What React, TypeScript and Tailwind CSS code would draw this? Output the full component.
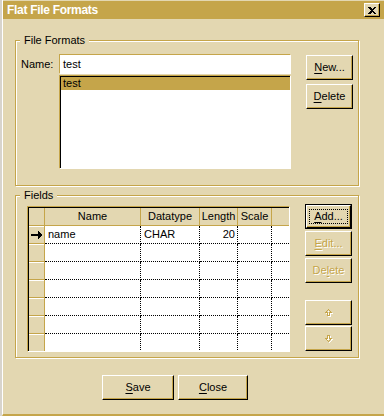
import React from 'react';

const raised =
  'border border-t-white border-l-white border-r-black border-b-black shadow-[inset_-1px_-1px_0_#c5a54a] bg-[#e3d7b1]';
const disabledText = 'text-[#c5a54a] [text-shadow:1px_1px_0_#ffffff]';

function Btn({
  children,
  w,
  disabled = false,
  isDefault = false,
}: {
  children: React.ReactNode;
  w: string;
  disabled?: boolean;
  isDefault?: boolean;
}) {
  if (isDefault) {
    return (
      <div className={`${w} h-[25px] border border-black flex`}>
        <div className={`${raised} flex-1 flex items-center justify-center`}>
          <span className="border border-dotted border-black px-[4px] leading-[13px]">{children}</span>
        </div>
      </div>
    );
  }
  return (
    <div
      className={`${w} h-[25px] ${raised} flex items-center justify-center ${disabled ? disabledText : 'text-black'}`}
    >
      {children}
    </div>
  );
}

function U({ children }: { children: React.ReactNode }) {
  return <span className="underline underline-offset-[2px]">{children}</span>;
}

function Group({
  label,
  h,
  children,
}: {
  label: string;
  h: string;
  children: React.ReactNode;
}) {
  return (
    <div
      className={`relative ml-[12px] w-[344px] ${h} border border-[#c5a54a] shadow-[inset_1px_1px_0_#ffffff,1px_1px_0_#ffffff]`}
    >
      <span className="absolute -top-[7px] left-[4px] px-[4px] bg-[#e3d7b1] leading-[13px]">{label}</span>
      {children}
    </div>
  );
}

const cols = ['w-[16px]', 'w-[96px]', 'w-[59px]', 'w-[38px]', 'w-[34px]', 'flex-1'];

function Arrow() {
  return (
    <svg width="12" height="8" viewBox="0 0 12 8" shapeRendering="crispEdges">
      <rect x="0" y="3" width="8" height="2" fill="#000" />
      <path d="M7 0 L12 4 L7 8 Z" fill="#000" />
    </svg>
  );
}

function UpIcon() {
  return (
    <svg width="9" height="9" viewBox="0 0 9 9" shapeRendering="crispEdges">
      <path d="M4.5 1.5 L1.5 4.5 L3.5 4.5 L3.5 7.5 L5.5 7.5 L5.5 4.5 L7.5 4.5 Z" fill="none" stroke="#ffffff" transform="translate(1,1)" />
      <path d="M4.5 1.5 L1.5 4.5 L3.5 4.5 L3.5 7.5 L5.5 7.5 L5.5 4.5 L7.5 4.5 Z" fill="none" stroke="#c5a54a" />
    </svg>
  );
}

function DownIcon() {
  return (
    <svg width="9" height="9" viewBox="0 0 9 9" shapeRendering="crispEdges">
      <path d="M4.5 7.5 L1.5 4.5 L3.5 4.5 L3.5 1.5 L5.5 1.5 L5.5 4.5 L7.5 4.5 Z" fill="none" stroke="#ffffff" transform="translate(1,1)" />
      <path d="M4.5 7.5 L1.5 4.5 L3.5 4.5 L3.5 1.5 L5.5 1.5 L5.5 4.5 L7.5 4.5 Z" fill="none" stroke="#c5a54a" />
    </svg>
  );
}

function Grid() {
  const headers = ['', 'Name', 'Datatype', 'Length', 'Scale', ''];
  const rows = [
    ['name', 'CHAR', '20', ''],
    ['', '', '', ''],
    ['', '', '', ''],
    ['', '', '', ''],
    ['', '', '', ''],
    ['', '', '', ''],
    ['', '', '', ''],
  ];
  return (
    <div className="w-[263px] h-[146px] border border-t-[#c5a54a] border-l-[#c5a54a] border-b-white border-r-white bg-white overflow-hidden">
      <div className="h-full border-t border-l border-black flex flex-col overflow-hidden">
        <div className="flex h-[18px] shrink-0">
          {headers.map((h, i) => (
            <div
              key={i}
              className={`${cols[i]} h-[18px] bg-[#e3d7b1] border-b border-[#c5a54a] ${i < 5 ? 'border-r' : ''} flex items-center justify-center leading-[13px]`}
            >
              {h}
            </div>
          ))}
        </div>
        {rows.map((r, ri) => (
          <div key={ri} className="flex h-[18px] shrink-0">
            <div className="w-[16px] h-[18px] bg-[#e3d7b1] border-r border-b border-[#c5a54a] shadow-[inset_0_1px_0_#ffffff] flex items-center justify-center">
              {ri === 0 ? <Arrow /> : null}
            </div>
            <div className={`${cols[1]} h-[18px] border-r border-b border-dotted border-black pl-[3px] flex items-center leading-[13px]`}>
              {r[0]}
            </div>
            <div className={`${cols[2]} h-[18px] border-r border-b border-dotted border-black pl-[3px] flex items-center leading-[13px]`}>
              {r[1]}
            </div>
            <div className={`${cols[3]} h-[18px] border-r border-b border-dotted border-black pr-[2px] flex items-center justify-end leading-[13px]`}>
              {r[2]}
            </div>
            <div className={`${cols[4]} h-[18px] border-r border-b border-dotted border-black`} />
            <div className="flex-1 h-[18px] border-b border-dotted border-black" />
          </div>
        ))}
      </div>
    </div>
  );
}

export default function App() {
  return (
    <div className="w-[384px] h-[416px] flex font-['Liberation_Sans',Arial,sans-serif] text-[11px] text-black overflow-hidden">
      <div className="w-[2px] h-full bg-[#d8d4cc]" />
      <div className="flex-1 h-full bg-[#e3d7b1] border-l border-white border-b-2 border-b-[#c5a54a] pt-[1px] flex flex-col">
        <div className="h-[18px] bg-[#c5a54a] flex items-center justify-between pl-[4px] pr-[4px]">
          <span className="text-white font-bold text-[12px] tracking-[-0.3px] leading-[16px]">Flat File Formats</span>
          <div className={`w-[16px] h-[14px] ${raised} flex items-center justify-center`}>
            <svg width="8" height="7" viewBox="0 0 8 7" shapeRendering="crispEdges">
              <path d="M0 0h2l2 2 2-2h2L5 3.5 8 7H6L4 5 2 7H0l3-3.5z" fill="#000" />
            </svg>
          </div>
        </div>

        <div className="mt-[21px]">
          <Group label="File Formats" h="h-[146px]">
            <div className="flex pl-[5px] pt-[13px]">
              <div className="w-[38px] h-[20px] flex items-center leading-[13px]">Name:</div>
              <div className="w-[232px] flex flex-col">
                <div className="h-[20px] border border-t-[#c5a54a] border-l-[#c5a54a] border-b-white border-r-white shadow-[inset_1px_1px_0_#000]">
                  <div className="h-full bg-white pl-[3px] pt-[1px] flex items-center leading-[13px]">test</div>
                </div>
                <div className="mt-[1px] h-[94px] border border-t-[#c5a54a] border-l-[#c5a54a] border-b-white border-r-white shadow-[inset_1px_1px_0_#000] bg-white pt-[1px] pl-[1px]">
                  <div className="h-[13px] bg-[#c5a54a] pl-[2px] leading-[13px]">test</div>
                </div>
              </div>
              <div className="ml-[15px] pt-[1px] flex flex-col gap-[4px]">
                <Btn w="w-[47px]">
                  <span>
                    <U>N</U>ew...
                  </span>
                </Btn>
                <Btn w="w-[47px]">
                  <span>
                    <U>D</U>elete
                  </span>
                </Btn>
              </div>
            </div>
          </Group>
        </div>

        <div className="mt-[9px]">
          <Group label="Fields" h="h-[163px]">
            <div className="flex pl-[11px] pt-[10px]">
              <Grid />
              <div className="ml-[15px] -mt-[2px] flex flex-col">
                <Btn w="w-[47px]" isDefault>
                  <span>
                    <U>A</U>dd...
                  </span>
                </Btn>
                <div className="mt-[2px]">
                  <Btn w="w-[47px]" disabled>
                    <span>
                      <U>E</U>dit...
                    </span>
                  </Btn>
                </div>
                <div className="mt-[2px]">
                  <Btn w="w-[47px]" disabled>
                    <span>
                      De<U>l</U>ete
                    </span>
                  </Btn>
                </div>
                <div className="mt-[17px]">
                  <Btn w="w-[47px]" disabled>
                    <UpIcon />
                  </Btn>
                </div>
                <div className="mt-[1px]">
                  <Btn w="w-[47px]" disabled>
                    <DownIcon />
                  </Btn>
                </div>
              </div>
            </div>
          </Group>
        </div>

        <div className="mt-[17px] ml-[99px] flex gap-[4px]">
          <Btn w="w-[72px]">
            <span>
              <U>S</U>ave
            </span>
          </Btn>
          <Btn w="w-[70px]">
            <span>
              <U>C</U>lose
            </span>
          </Btn>
        </div>
      </div>
    </div>
  );
}
